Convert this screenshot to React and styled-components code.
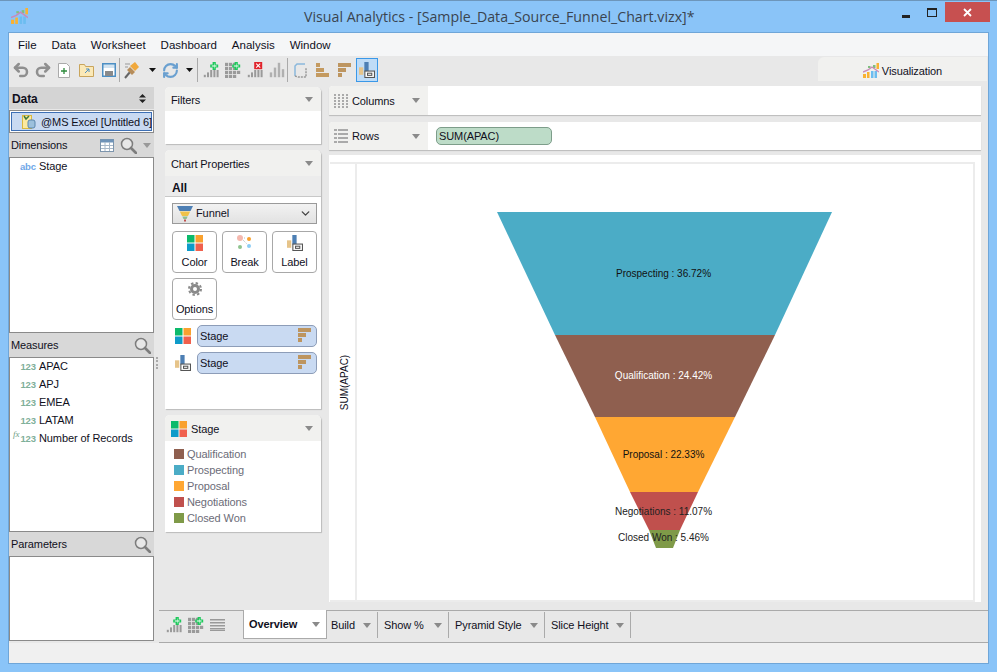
import React from "react";
import styled, { createGlobalStyle } from "styled-components";
import { Undo2, Redo2, RefreshCw, ChevronDown } from "lucide-react";

const GlobalStyle = createGlobalStyle`
  html, body { margin: 0; padding: 0; }
  body { font-family: "Liberation Sans", sans-serif; font-size: 11px; letter-spacing: -0.1px; color: #10101c; }
  svg { flex: none; display: block; }
`;

const legend = [
  ["Qualification", "#8f5f4f"],
  ["Prospecting", "#4bacc6"],
  ["Proposal", "#ffa733"],
  ["Negotiations", "#c0504d"],
  ["Closed Won", "#7f9a48"],
];

const measures = [
  ["APAC"],
  ["APJ"],
  ["EMEA"],
  ["LATAM"],
  ["Number of Records", true],
];

const tabs = [
  ["Overview", 84],
  ["Build", 51],
  ["Show %", 71],
  ["Pyramid Style", 96],
  ["Slice Height", 86],
];

const Caret = ({ color = "#8a8a8a" }) => (
  <svg width="8" height="5" viewBox="0 0 8 5"><path d="M0 0h8L4 5z" fill={color} /></svg>
);

const Bars = ({ color = "#9a9a9a" }) => (
  <svg width="16" height="16" viewBox="0 0 20 20">
    {[[1, 6], [6, 12], [11, 18], [16, 10]].map(([x, h]) => (
      <rect key={x} x={x} y={19 - h} width="3" height={h} fill={color} />
    ))}
  </svg>
);

const PlusBars = ({ red }) => (
  <svg width="16" height="16" viewBox="0 0 20 20">
    {[[1, 3], [5, 6], [9, 9], [13, 9], [17, 9]].map(([x, h]) => (
      <rect key={x} x={x} y={19 - h} width="2.500" height={h} fill="#9a9a9a" />
    ))}
    {red ? (
      <>
        <rect x="9" y="0" width="10" height="9" fill="#e0242c" />
        <path d="M11.500 2l5 5M16.500 2l-5 5" stroke="#fff" strokeWidth="1.300" />
      </>
    ) : (
      <>
        <path d="M9 3h3V0h4v3h3v4h-3v3h-4V7H9z" fill="#1ec85c" />
        <path d="M11 4.500h3V2h.5v2.500H17V5.500h-2.500V8H14V5.500h-3z" fill="#fff" />
      </>
    )}
  </svg>
);

const PlusGrid = () => (
  <svg width="16" height="16" viewBox="0 0 20 20">
    {[0, 5, 10, 15].map((y) =>
      [0, 5, 10].map((x) => <rect key={`${x}${y}`} x={x} y={y + 1} width="4" height="4" fill="#9a9a9a" />)
    )}
    <rect x="15" y="11" width="4" height="4" fill="#9a9a9a" />
    <path d="M9 3h3V0h4v3h3v4h-3v3h-4V7H9z" fill="#1ec85c" />
    <path d="M11 4.500h3V2h.5v2.500H17V5.500h-2.500V8H14V5.500h-3z" fill="#fff" />
  </svg>
);

const ColorSquares = ({ size = 16 }) => (
  <svg width={size} height={size} viewBox="0 0 16 16">
    <rect width="7.500" height="7.500" fill="#0cba6b" />
    <rect x="8.500" width="7.500" height="7.500" fill="#f9a12e" />
    <rect y="8.500" width="7.500" height="7.500" fill="#0e9bc9" />
    <rect x="8.500" y="8.500" width="7.500" height="7.500" fill="#f0604d" />
  </svg>
);

const LabelIcon = () => (
  <svg width="16" height="16" viewBox="0 0 15 15">
    <rect y="5" width="4" height="7" fill="#e6c48a" />
    <rect x="5" y="0" width="4" height="9" fill="#4d7fb4" />
    <rect x="5.500" y="8.500" width="9" height="6" fill="#fff" stroke="#555" />
    <rect x="8" y="10.500" width="4" height="2" fill="none" stroke="#555" />
  </svg>
);

const SortBars = () => (
  <svg width="13" height="15" viewBox="0 0 13 15">
    <rect width="13" height="4" fill="#bd9560" />
    <rect y="5" width="8" height="4" fill="#bd9560" />
    <rect y="10" width="4" height="4" fill="#bd9560" />
  </svg>
);

const LogoIcon = ({ size = 16 }) => (
  <svg width={size} height={size} viewBox="0 0 16 16">
    <rect x="0" y="11" width="3" height="4" fill="#f9b233" />
    <rect x="4" y="9" width="2.500" height="6" fill="#f9b233" />
    <rect x="8" y="8" width="2.500" height="7" fill="#6cbdf0" />
    <rect x="11.500" y="8" width="2.500" height="7" fill="#6cbdf0" />
    <rect x="13.500" y="0" width="2.500" height="6" fill="#f9b233" />
    <rect x="10" y="2" width="2.500" height="3" fill="#7fbf7f" />
    <rect x="5" y="3" width="2.500" height="2" fill="#7fbf7f" />
    <path d="M0 9l5-2 4-3 7 5" fill="none" stroke="#c98ab8" strokeWidth="1.400" />
  </svg>
);

const FunnelIcon = () => (
  <svg width="16" height="16" viewBox="0 0 16 16">
    <path d="M0 0h16l-2.500 5h-11z" fill="#4d7fb4" />
    <path d="M2.800 5.500h10.400L11 10H5z" fill="#f0c24a" />
    <path d="M5.300 10.500h5.400L9.500 13h-3z" fill="#8fbf8f" />
    <rect x="7" y="13.500" width="2" height="2" fill="#c0504d" />
  </svg>
);

const Magnifier = () => (
  <svg width="17" height="17" viewBox="0 0 17 17">
    <circle cx="7" cy="7" r="5.500" fill="#fff" fillOpacity=".4" stroke="#7d7d7d" strokeWidth="1.500" />
    <path d="M11 11l5 5" stroke="#7d7d7d" strokeWidth="2.600" strokeLinecap="round" />
  </svg>
);

const TableIcon = () => (
  <svg width="14" height="13" viewBox="0 0 14 13">
    <rect x=".5" y=".5" width="13" height="12" fill="#fff" stroke="#7d95ad" />
    <rect x=".5" y=".5" width="13" height="3" fill="#6f93b8" />
    <path d="M5 3v9M9.500 3v9M1 6.500h12M1 9.500h12" stroke="#a8b8c8" />
  </svg>
);

const Page = styled.div`
  width: 997px;
  height: 672px;
  overflow: hidden;
  box-sizing: border-box;
  padding: 0 8px 8px;
  background: #8ac4f8;
  border-top: 1px solid #6d96bb;
  display: flex;
  flex-direction: column;
`;

const TitleBar = styled.div`
  height: 31px;
  display: flex;
  align-items: center;
  position: relative;
  flex: none;
`;

const TitleLogo = styled.div`
  margin: 0 0 0 3px;
  display: flex;
`;

const TitleText = styled.div`
  position: absolute;
  left: 296px;
  top: 6px;
  font-family: "Open Sans", sans-serif;
  font-size: 14.2px;
  letter-spacing: 0;
  color: #3a4450;
  white-space: nowrap;
`;

const WinButtons = styled.div`
  margin-left: auto;
  margin-right: -1px;
  margin-top: 1px;
  align-self: flex-start;
  display: flex;
  align-items: flex-start;
`;

const MinBtn = styled.div`
  width: 8px;
  height: 3px;
  margin: 13px 17px 0 0;
  background: #222;
`;

const MaxBtn = styled.div`
  width: 8px;
  height: 6px;
  margin: 6px 8px 0 0;
  border: 1px solid #222;
  border-top-width: 2px;
`;

const CloseBtn = styled.div`
  width: 45px;
  height: 20px;
  background: #c75050;
  color: #fff;
  display: flex;
  align-items: center;
  justify-content: center;
`;

const Body = styled.div`
  flex: 1;
  min-height: 0;
  border: 1px solid #6fa6d8;
  display: flex;
  flex-direction: column;
  background: #e8e8e8;
`;

const MenuBar = styled.div`
  height: 23px;
  background: #f5f6f7;
  display: flex;
  align-items: center;
  padding: 1px 0 0 9px;
  gap: 15px;
  flex: none;
  box-sizing: border-box;
  font-size: 11.5px;
  letter-spacing: 0;
`;

const Toolbar = styled.div`
  height: 28px;
  display: flex;
  align-items: center;
  padding-left: 1px;
  flex: none;
  position: relative;
`;

const Tool = styled.div`
  width: ${(p) => p.$w}px;
  height: 24px;
  display: flex;
  align-items: center;
  justify-content: center;
  flex: none;
  box-sizing: border-box;
  ${(p) => p.$active && "background: #bfdcf7; border: 1px solid #3a98e8;"}
`;

const ToolSep = styled.div`
  width: 1px;
  height: 24px;
  background: #aaa;
  flex: none;
`;

const VizTab = styled.div`
  position: absolute;
  right: 1px;
  top: 1px;
  width: 169px;
  height: 24px;
  padding-top: 3px;
  background: #f1f1ef;
  border-radius: 6px 0 0 0;
  display: flex;
  align-items: center;
  justify-content: center;
  gap: 3px;
  box-sizing: border-box;
`;

const Main = styled.div`
  flex: 1;
  min-height: 0;
  display: flex;
`;

const LeftPanel = styled.div`
  width: 145px;
  flex: none;
  display: flex;
  flex-direction: column;
  padding-top: 3px;
`;

const DataHeader = styled.div`
  height: 22px;
  margin-bottom: 1px;
  background: #d4d4d4;
  display: flex;
  align-items: center;
  justify-content: space-between;
  padding: 1px 8px 0 3px;
  box-sizing: border-box;
  font-weight: 700;
  font-size: 12px;
  flex: none;
`;

const SourceBox = styled.div`
  height: 23px;
  flex: none;
  border: 1px solid #8a8a8a;
  background: #fff;
  padding: 1px;
  box-sizing: border-box;
`;

const SourceInner = styled.div`
  height: 100%;
  background: #c9daf2;
  border: 1px solid #3d6fb4;
  box-sizing: border-box;
  display: flex;
  align-items: center;
  gap: 5px;
  padding-left: 10px;
  white-space: nowrap;
`;

const SectionHeader = styled.div`
  height: 24px;
  flex: none;
  display: flex;
  align-items: center;
  gap: 6px;
  padding: 0 3px 0 2px;
  background: #d8d8d8;
`;

const SectionTitle = styled.div`
  flex: 1;
`;

const ListBox = styled.div`
  height: ${(p) => p.$h}px;
  flex: none;
  box-sizing: border-box;
  background: #fff;
  border: 1px solid #8a8a8a;
`;

const FieldRow = styled.div`
  height: 18px;
  padding-bottom: 2px;
  box-sizing: border-box;
  display: flex;
  align-items: center;
  white-space: nowrap;
  position: relative;
`;

const FieldType = styled.span`
  width: 29px;
  padding-right: 3px;
  box-sizing: border-box;
  text-align: right;
  flex: none;
  font-size: 9.500px;
  font-weight: 700;
  color: ${(p) => p.$color};
`;

const FxMark = styled.span`
  position: absolute;
  left: 3px;
  top: -1px;
  font-family: "Liberation Serif", serif;
  font-style: italic;
  font-size: 9px;
  color: #6f9d85;
`;

const Workspace = styled.div`
  flex: 1;
  min-width: 0;
  display: flex;
  flex-direction: column;
`;

const Columns = styled.div`
  flex: 1;
  min-height: 0;
  display: flex;
`;

const MiddleCol = styled.div`
  width: 156px;
  margin: 3px 0 0 11px;
  flex: none;
  display: flex;
  flex-direction: column;
  position: relative;
`;

const Card = styled.div`
  background: #fff;
  height: ${(p) => p.$h}px;
  margin-bottom: ${(p) => p.$mb || 0}px;
  flex: none;
  border-radius: 5px 5px 0 0;
  box-shadow: 1px 1px 1px #bbb;
  box-sizing: border-box;
`;

const CardHead = styled.div`
  height: ${(p) => p.$h || 24}px;
  background: #f1f1ef;
  border-radius: 5px 5px 0 0;
  display: flex;
  align-items: center;
  padding: 1px 8px 0 6px;
  gap: 4px;
  box-sizing: border-box;
`;

const AllRow = styled.div`
  height: 21px;
  background: #ececec;
  border-bottom: 1px solid #c8c8c8;
  font-weight: 700;
  font-size: 12px;
  display: flex;
  align-items: center;
  padding: 3px 0 0 7px;
  box-sizing: border-box;
`;

const ChartType = styled.div`
  height: 21px;
  box-sizing: border-box;
  margin: 6px 4px 0 7px;
  border: 1px solid #9a9a9a;
  background: linear-gradient(#f2f2f2, #e2e2e2);
  display: flex;
  align-items: center;
  padding: 0 4px;
  gap: 3px;
`;

const ChartTypeLabel = styled.span`
  flex: 1;
  padding-bottom: 1px;
`;

const Shelf = styled.div`
  display: grid;
  grid-template-columns: repeat(3, 45px);
  gap: 5px;
  padding: 7px 0 0 7px;
`;

const ShelfButton = styled.div`
  height: 42px;
  box-sizing: border-box;
  border: 1px solid #a8a8a8;
  border-radius: 4px;
  background: #fff;
  display: flex;
  flex-direction: column;
  align-items: center;
  justify-content: space-between;
  padding: 3px 0 4px;
`;

const Encoding = styled.div`
  display: flex;
  align-items: center;
  gap: 6px;
  padding: 0 4px 0 10px;
  height: 27px;
`;

const EncodingList = styled.div`
  padding-top: 2px;
`;

const Pill = styled.div`
  flex: 1;
  height: 22px;
  box-sizing: border-box;
  background: ${(p) => p.$bg || "#c9daf2"};
  border: 1px solid ${(p) => p.$line || "#8d9db8"};
  border-radius: 5px;
  display: flex;
  align-items: center;
  justify-content: space-between;
  padding: 0 5px 0 2px;
`;

const LegendList = styled.div`
  padding-top: 5px;
`;

const LegendRow = styled.div`
  height: 16px;
  display: flex;
  align-items: center;
  gap: 3px;
  padding-left: 9px;
  color: #6c6c78;
`;

const Swatch = styled.span`
  width: 10px;
  height: 10px;
  background: ${(p) => p.$color};
`;

const Splitter = styled.div`
  position: absolute;
  left: -9px;
  top: 270px;
  width: 2px;
  height: 12px;
  border-left: 2px dotted #aaa;
`;

const RightCol = styled.div`
  flex: 1;
  min-width: 0;
  margin: 2px 7px 0 8px;
  display: flex;
  flex-direction: column;
  gap: 7px;
`;

const ShelfRow = styled.div`
  height: ${(p) => p.$h}px;
  flex: none;
  display: flex;
  background: #fff;
  border-radius: 4px 0 0 0;
  box-shadow: 0 1px 1px #bbb;
`;

const ShelfHead = styled.div`
  width: 99px;
  flex: none;
  background: #f1f1ef;
  border-radius: 4px 0 0 0;
  display: flex;
  align-items: center;
  padding: 0 8px 0 5px;
  box-sizing: border-box;
  gap: 4px;
`;

const ShelfName = styled.span`
  flex: 1;
`;

const ShelfBody = styled.div`
  flex: 1;
  padding: 5px 8px;
`;

const ShelfPill = styled(Pill)`
  flex: none;
  width: 116px;
  height: 18px;
  padding-left: 2px;
`;

const ChartCard = styled.div`
  height: 447px;
  flex: none;
  margin-top: -2px;
  background: #fff;
  padding: 7px 6px 4px 1px;
  box-sizing: border-box;
`;

const ChartFrame = styled.div`
  height: 100%;
  border: 2px solid #ececec;
  border-width: 2px 2px 2px 0;
  display: flex;
`;

const AxisStrip = styled.div`
  width: 25px;
  flex: none;
  border-right: 2px solid #ececec;
  display: flex;
  align-items: center;
  justify-content: center;
`;

const AxisLabel = styled.span`
  transform: rotate(-90deg);
  white-space: nowrap;
  font-size: 10px;
  letter-spacing: 0;
  position: relative;
  left: 2px;
`;

const Plot = styled.div`
  flex: 1;
  min-width: 0;
`;

const TabBar = styled.div`
  height: 33px;
  flex: none;
  margin: 6px 0 0 5px;
  display: flex;
  align-items: flex-start;
  padding-left: 7px;
  border-top: 1px solid #aaa;
  border-bottom: 1px solid #aaa;
  box-sizing: border-box;
`;

const TabIcons = styled.div`
  width: 77px;
  height: 27px;
  display: flex;
  align-items: center;
  gap: 6px;
`;

const Tab = styled.div`
  width: ${(p) => p.$w}px;
  box-sizing: border-box;
  display: flex;
  align-items: center;
  justify-content: space-between;
  padding: 0 6px 0 ${(p) => (p.$first ? 4 : 6)}px;
  white-space: nowrap;
  font-weight: ${(p) => (p.$active ? 700 : 400)};
  background: ${(p) => (p.$active ? "#fff" : "transparent")};
  border-right: 1px solid #aaa;
  height: 26px;
  margin-top: 1px;
  ${(p) => p.$active && "border: 1px solid #aaa; border-top: none; margin-top: -1px; height: 29px; padding-left: 5px;"}
`;

const StatusBar = styled.div`
  height: 20px;
  flex: none;
  background: #f0f0f0;
`;

const funnel = [
  ["#4bacc6", "497,212 832,212 775,335 555,335"],
  ["#8f5f4f", "555,335 775,335 735,417 595,417"],
  ["#ffa733", "595,417 735,417 698,492 630,492"],
  ["#c0504d", "630,492 698,492 680,530 649,530"],
  ["#7f9a48", "649,530 680,530 673,548 656,548"],
];

const funnelLabels = [
  ["Prospecting : 36.72%", 663.5, 277, "#111"],
  ["Qualification : 24.42%", 663.5, 379, "#fff"],
  ["Proposal : 22.33%", 663.5, 458, "#111"],
  ["Negotiations : 11.07%", 663.5, 515, "#222"],
  ["Closed Won : 5.46%", 663.5, 541, "#222"],
];

const FunnelChart = () => (
  <svg width="618" height="432" viewBox="357 164 618 432">
    {funnel.map(([fill, points]) => (
      <polygon key={points} points={points} fill={fill} />
    ))}
    {funnelLabels.map(([label, x, y, fill]) => (
      <text key={label} x={x} y={y} fill={fill} textAnchor="middle" fontFamily="Liberation Sans, sans-serif" fontSize="10" letterSpacing="0">
        {label}
      </text>
    ))}
  </svg>
);

const App = () => (
  <Page>
    <GlobalStyle />
    <TitleBar>
      <TitleLogo><LogoIcon size={17} /></TitleLogo>
      <TitleText>Visual Analytics - [Sample_Data_Source_Funnel_Chart.vizx]*</TitleText>
      <WinButtons>
        <MinBtn />
        <MaxBtn />
        <CloseBtn>
          <svg width="9" height="9" viewBox="0 0 9 9"><path d="M1 1l7 7M8 1L1 8" stroke="#fff" strokeWidth="1.800" /></svg>
        </CloseBtn>
      </WinButtons>
    </TitleBar>
    <Body>
      <MenuBar>
        {["File", "Data", "Worksheet", "Dashboard", "Analysis", "Window"].map((m) => (
          <span key={m}>{m}</span>
        ))}
      </MenuBar>
      <Toolbar>
        <Tool $w={22}><Undo2 size={18} color="#8f8f8f" strokeWidth={3.400} /></Tool>
        <Tool $w={21}><Redo2 size={18} color="#8f8f8f" strokeWidth={3.400} /></Tool>
        <Tool $w={21}>
          <svg width="12" height="15" viewBox="0 0 12 15">
            <path d="M.5.500h8l3 3v11H.5z" fill="#fff" stroke="#aaa" />
            <path d="M6 5v6M3 8h6" stroke="#2e8b3d" strokeWidth="1.300" />
          </svg>
        </Tool>
        <Tool $w={24}>
          <svg width="15" height="13" viewBox="0 0 15 13">
            <path d="M.5 12.500V.5h5l1 2h8v10z" fill="#fbe9b7" stroke="#c9a55c" />
            <path d="M6 9l4-4M7 5h3v3" fill="none" stroke="#4d8fc4" />
          </svg>
        </Tool>
        <Tool $w={21}>
          <svg width="14" height="14" viewBox="0 0 14 14">
            <rect x=".75" y=".75" width="12.500" height="12.500" fill="#fff" stroke="#4d8fc4" strokeWidth="1.500" />
            <rect x="1" y="1" width="12" height="4" fill="#4d8fc4" fillOpacity=".25" />
            <rect x="3" y="8" width="8" height="5" fill="#8a8a8a" />
          </svg>
        </Tool>
        <ToolSep />
        <Tool $w={24}>
          <svg width="17" height="18" viewBox="0 0 17 18">
            <path d="M1 17l5-6" stroke="#666" strokeWidth="2" />
            <path d="M3 9l3-3 5 5-3 3z" fill="#b78d5a" />
            <path d="M6 5l5-4 4 5-4 4z" fill="#f0a83c" />
            <path d="M1 3h5M1 6h3" stroke="#999" />
          </svg>
        </Tool>
        <Tool $w={16}><svg width="7" height="4" viewBox="0 0 7 4"><path d="M0 0h7L3.500 4z" fill="#111" /></svg></Tool>
        <Tool $w={21}><RefreshCw size={17} color="#6aa0d0" strokeWidth={3} /></Tool>
        <Tool $w={16}><svg width="7" height="4" viewBox="0 0 7 4"><path d="M0 0h7L3.500 4z" fill="#111" /></svg></Tool>
        <ToolSep />
        <Tool $w={25}><PlusBars /></Tool>
        <Tool $w={19}><PlusGrid /></Tool>
        <Tool $w={25}><PlusBars red /></Tool>
        <Tool $w={20}><Bars color="#b0b0b0" /></Tool>
        <ToolSep />
        <Tool $w={24}>
          <svg width="15" height="15" viewBox="0 0 15 15">
            <path d="M2 13V3l2-2h8" fill="none" stroke="#8ab8dc" strokeWidth="1.500" />
            <path d="M2 13l3 1h8V5" fill="none" stroke="#999" strokeWidth="1.500" strokeDasharray="2 1" />
          </svg>
        </Tool>
        <Tool $w={21}>
          <svg width="14" height="14" viewBox="0 0 14 14">
            <rect width="4" height="4" fill="#c49a60" />
            <rect y="5" width="8" height="4" fill="#c49a60" />
            <rect y="10" width="13" height="4" fill="#c49a60" />
          </svg>
        </Tool>
        <Tool $w={23}><SortBars /></Tool>
        <Tool $w={22} $active><LabelIcon /></Tool>
        <VizTab><LogoIcon size={16} />Visualization</VizTab>
      </Toolbar>
      <Main>
        <LeftPanel>
          <DataHeader>
            Data
            <svg width="7" height="9" viewBox="0 0 7 9"><path d="M3.500 0L7 3.500H0zM3.500 9L0 5.500h7z" fill="#222" /></svg>
          </DataHeader>
          <SourceBox>
            <SourceInner>
              <svg width="14" height="14" viewBox="0 0 14 14">
                <rect x=".5" y=".5" width="9" height="13" fill="#fbe9a0" stroke="#d8b840" />
                <rect x="6" y="5" width="7" height="8" rx="2" fill="#9cc0dc" stroke="#5a86ac" />
                <path d="M2 1l2 3 3-3" fill="none" stroke="#3c7a3c" strokeWidth="1.500" />
              </svg>
              @MS Excel [Untitled 6]
            </SourceInner>
          </SourceBox>
          <SectionHeader>
            <SectionTitle>Dimensions</SectionTitle>
            <TableIcon />
            <Magnifier />
            <Caret color="#999" />
          </SectionHeader>
          <ListBox $h={176}>
            <FieldRow>
              <FieldType $color="#6fa8e8">abc</FieldType>
              Stage
            </FieldRow>
          </ListBox>
          <SectionHeader>
            <SectionTitle>Measures</SectionTitle>
            <Magnifier />
          </SectionHeader>
          <ListBox $h={175}>
            {measures.map(([name, fx]) => (
              <FieldRow key={name}>
                {fx && <FxMark>fx</FxMark>}
                <FieldType $color="#7fb09a">123</FieldType>
                {name}
              </FieldRow>
            ))}
          </ListBox>
          <SectionHeader>
            <SectionTitle>Parameters</SectionTitle>
            <Magnifier />
          </SectionHeader>
          <ListBox $h={85} />
        </LeftPanel>
        <Workspace>
          <Columns>
            <MiddleCol>
              <Splitter />
              <Card $h={57} $mb={6}>
                <CardHead $h={24}>
                  <ShelfName>Filters</ShelfName>
                  <Caret />
                </CardHead>
              </Card>
              <Card $h={259} $mb={6}>
                <CardHead $h={26}>
                  <ShelfName>Chart Properties</ShelfName>
                  <Caret />
                </CardHead>
                <AllRow>All</AllRow>
                <ChartType>
                  <FunnelIcon />
                  <ChartTypeLabel>Funnel</ChartTypeLabel>
                  <ChevronDown size={13} color="#444" strokeWidth={2.500} />
                </ChartType>
                <Shelf>
                  <ShelfButton><ColorSquares />Color</ShelfButton>
                  <ShelfButton>
                    <svg width="16" height="16" viewBox="0 0 16 16">
                      <circle cx="3" cy="3" r="3" fill="#f5b8ae" />
                      <circle cx="12" cy="4" r="2" fill="#f9a12e" />
                      <circle cx="3" cy="12" r="2" fill="#8fc48f" />
                      <circle cx="12" cy="11" r="2" fill="#8ccdf5" />
                      <path d="M6 5l4 4M7 3h2" stroke="#bbb" strokeDasharray="1 1" />
                    </svg>
                    Break
                  </ShelfButton>
                  <ShelfButton><LabelIcon />Label</ShelfButton>
                  <ShelfButton>
                    <svg width="14" height="14" viewBox="0 0 14 14">
                      <circle cx="7" cy="7" r="3.500" fill="none" stroke="#8a8a8a" strokeWidth="3" />
                      <circle cx="7" cy="7" r="6" fill="none" stroke="#8a8a8a" strokeWidth="2" strokeDasharray="2.400 2.300" />
                    </svg>
                    Options
                  </ShelfButton>
                </Shelf>
                <EncodingList>
                  <Encoding>
                    <ColorSquares />
                    <Pill>Stage<SortBars /></Pill>
                  </Encoding>
                  <Encoding>
                    <LabelIcon />
                    <Pill>Stage<SortBars /></Pill>
                  </Encoding>
                </EncodingList>
              </Card>
              <Card $h={117}>
                <CardHead $h={26}>
                  <ColorSquares />
                  <ShelfName>Stage</ShelfName>
                  <Caret />
                </CardHead>
                <LegendList>
                  {legend.map(([name, color]) => (
                    <LegendRow key={name}>
                      <Swatch $color={color} />
                      {name}
                    </LegendRow>
                  ))}
                </LegendList>
              </Card>
            </MiddleCol>
            <RightCol>
              <ShelfRow $h={29}>
                <ShelfHead>
                  <svg width="14" height="14" viewBox="0 0 14 14">
                    {[0, 4, 8, 12].map((x) => (
                      <path key={x} d={`M${x + 1} 0v14`} stroke="#aaa" strokeWidth="2" strokeDasharray="2 1" />
                    ))}
                  </svg>
                  <ShelfName>Columns</ShelfName>
                  <Caret />
                </ShelfHead>
                <ShelfBody />
              </ShelfRow>
              <ShelfRow $h={28}>
                <ShelfHead>
                  <svg width="14" height="14" viewBox="0 0 14 14">
                    {[1, 5, 9, 13].map((y) => (
                      <path key={y} d={`M0 ${y}h14`} stroke="#aaa" strokeWidth="2" strokeDasharray="3 1 10" />
                    ))}
                  </svg>
                  <ShelfName>Rows</ShelfName>
                  <Caret />
                </ShelfHead>
                <ShelfBody>
                  <ShelfPill $bg="#bddcc8" $line="#7d9d8a">SUM(APAC)</ShelfPill>
                </ShelfBody>
              </ShelfRow>
              <ChartCard>
                <ChartFrame>
                  <AxisStrip><AxisLabel>SUM(APAC)</AxisLabel></AxisStrip>
                  <Plot><FunnelChart /></Plot>
                </ChartFrame>
              </ChartCard>
            </RightCol>
          </Columns>
          <TabBar>
            <TabIcons>
              <PlusBars />
              <PlusGrid />
              <svg width="16" height="13" viewBox="0 0 16 13">
                {[1, 4, 7, 10, 12].map((y) => <rect key={y} y={y} width="15" height="1.500" fill="#999" />)}
              </svg>
            </TabIcons>
            {tabs.map(([name, w], i) => (
              <Tab key={name} $w={w} $active={i === 0} $first={i === 1}>
                {name}
                <Caret />
              </Tab>
            ))}
          </TabBar>
        </Workspace>
      </Main>
      <StatusBar />
    </Body>
  </Page>
);

export default App;
